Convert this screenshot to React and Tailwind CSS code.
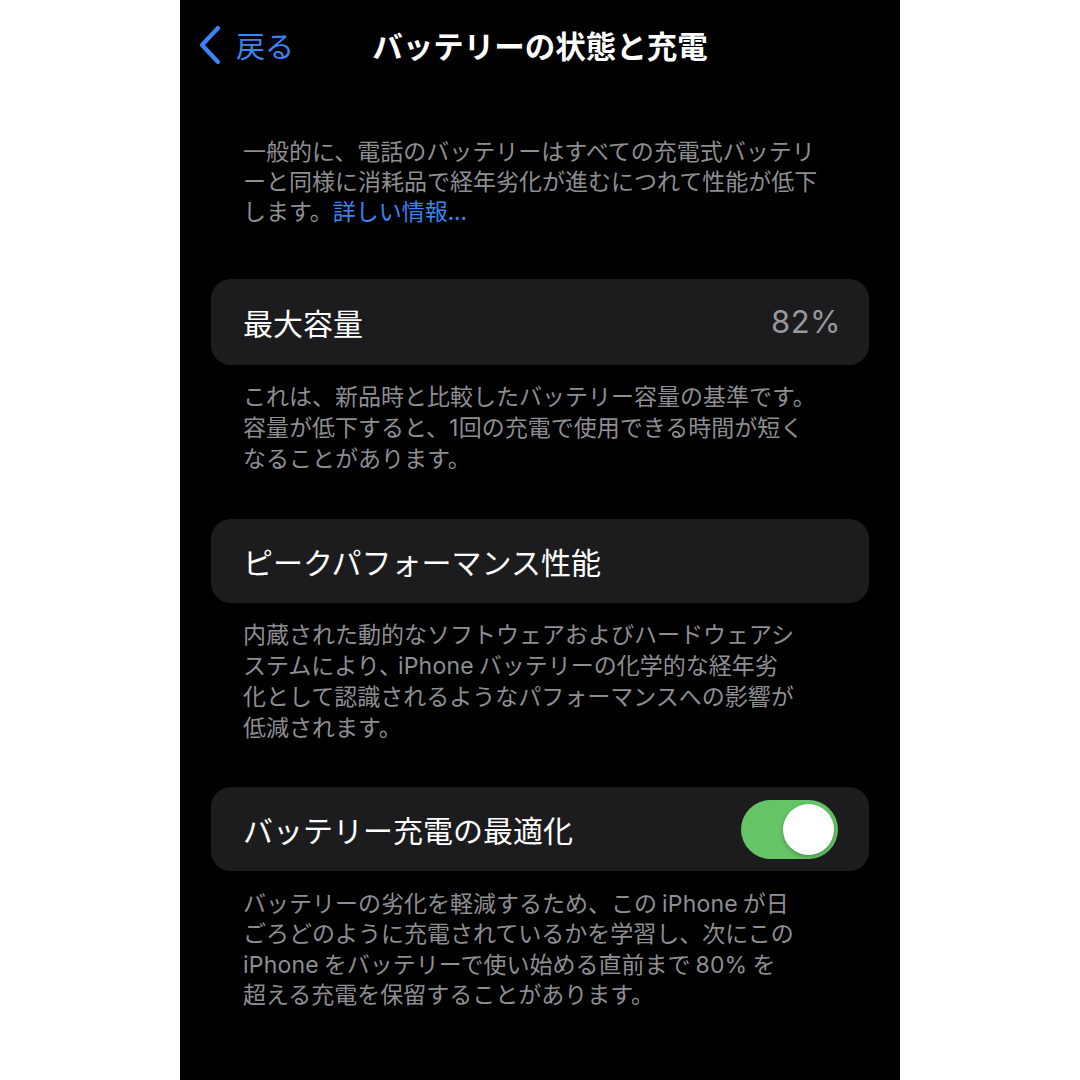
import React from 'react';

const font = { fontFamily: '"Noto Sans CJK JP", "Noto Sans", sans-serif' };

const L = ({ children, className = 'mx-[5px]' }) => (
  <span className={`font-['Inter',sans-serif] leading-none tracking-[0.2px] ${className}`}>{children}</span>
);

const Lines = ({ lines, className = '' }) => (
  <div className={`px-[63px] text-[23px] text-[#8e8e93] ${className}`}>
    {lines.map((l, i) => (
      <div key={i} className="whitespace-nowrap">{l}</div>
    ))}
  </div>
);

const Card = ({ children, className = '' }) => (
  <div className={`mx-[31px] flex items-center justify-between rounded-[20px] bg-[#1c1c1e] pl-[32px] pr-[31px] ${className}`}>
    {children}
  </div>
);

const Toggle = () => (
  <div className="flex h-[59px] w-[97px] items-center justify-end rounded-full bg-[#64c466] pr-[4px]">
    <div className="h-[51px] w-[51px] rounded-full bg-white shadow-[0_2px_4px_rgba(0,0,0,0.25)]" />
  </div>
);

export default function App() {
  return (
    <div className="min-h-screen bg-white" style={font}>
      <div className="mx-auto min-h-[1080px] w-[720px] bg-black pb-10">
        {/* Header */}
        <div className="grid h-[90px] grid-cols-[1fr_auto_1fr] items-center">
          <div className="flex items-center pl-[18px] text-[#3b84f5]">
            <svg width="24" height="40" viewBox="0 0 24 40" fill="none">
              <path d="M20 3 L4 20 L20 37" stroke="currentColor" strokeWidth="4.2" strokeLinecap="round" strokeLinejoin="round" />
            </svg>
            <span className="ml-[14px] text-[29px] leading-none">戻る</span>
          </div>
          <h1 className="text-[30.5px] font-bold leading-none text-white">バッテリーの状態と充電</h1>
          <div />
        </div>

        <Lines
          className="mt-[45px] leading-[30px]"
          lines={[
            '一般的に、電話のバッテリーはすべての充電式バッテリ',
            'ーと同様に消耗品で経年劣化が進むにつれて性能が低下',
            <>します。<span className="text-[#3b84f5]">詳しい情報...</span></>,
          ]}
        />

        <Card className="mt-[54px] h-[86px]">
          <span className="text-[30px] text-white">最大容量</span>
          <span className="-mr-[3px] font-['Inter',sans-serif] text-[31px] tracking-[0.5px] text-[#98989e]">82%</span>
        </Card>

        <Lines
          className="mt-[15px] leading-[31px]"
          lines={[
            'これは、新品時と比較したバッテリー容量の基準です。',
            <>容量が低下すると、<L className="">1</L>回の充電で使用できる時間が短く</>,
            'なることがあります。',
          ]}
        />

        <Card className="mt-[46px] h-[84px]">
          <span className="text-[30px] text-white">ピークパフォーマンス性能</span>
        </Card>

        <Lines
          className="mt-[15px] leading-[31px]"
          lines={[
            '内蔵された動的なソフトウェアおよびハードウェアシ',
            <>ステムにより、<L className="-ml-[4px] mr-[5px]">iPhone</L>バッテリーの化学的な経年劣</>,
            '化として認識されるようなパフォーマンスへの影響が',
            '低減されます。',
          ]}
        />

        <Card className="mt-[45px] h-[84px]">
          <span className="text-[30px] text-white">バッテリー充電の最適化</span>
          <Toggle />
        </Card>

        <Lines
          className="mt-[16px] leading-[30.3px]"
          lines={[
            <>バッテリーの劣化を軽減するため、この<L>iPhone</L>が日</>,
            'ごろどのように充電されているかを学習し、次にこの',
            <><L className="mr-[5px]">iPhone</L>をバッテリーで使い始める直前まで<L>80%</L>を</>,
            '超える充電を保留することがあります。',
          ]}
        />
      </div>
    </div>
  );
}
